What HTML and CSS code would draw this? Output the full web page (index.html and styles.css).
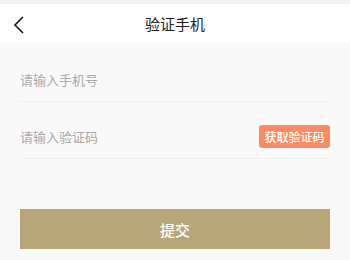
FILE: index.html
```html
<!DOCTYPE html>
<html>
<head>
    <meta charset="utf-8">
    <title>验证手机</title>
    <link rel="stylesheet" href="styles.css">
</head>
<body>
    <div class="topbar"></div>
    <div class="header">
        <a class="back" href="#">
            <svg width="12" height="18" viewBox="0 0 12 18">
                <path d="M10 1 L2 9 L10 17" fill="none" stroke="#111" stroke-width="1.6"/>
            </svg>
        </a>
        <h1>验证手机</h1>
    </div>
    <form class="form">
        <div class="field">
            <input type="text" placeholder="请输入手机号">
        </div>
        <div class="field">
            <input type="text" placeholder="请输入验证码">
            <button type="button" class="code-btn">获取验证码</button>
        </div>
        <button type="submit" class="submit">提交</button>
    </form>
</body>
</html>
```

FILE: styles.css
```css
body {
    margin: 0;
    background: #f9f9f9;
    font-family: "Noto Sans CJK SC", "Noto Sans", sans-serif;
}
.topbar {
    height: 4px;
    background: #f2f2f2;
}
.header {
    height: 39px;
    background: #fff;
    display: flex;
    align-items: center;
    justify-content: center;
    position: relative;
}
.back {
    position: absolute;
    left: 13px;
    top: 11px;
    display: block;
}
h1 {
    margin: 0;
    font-size: 15px;
    font-weight: normal;
    color: #222;
}
.form {
    padding: 15px 20px 0;
}
.field {
    box-sizing: border-box;
    height: 44px;
    display: flex;
    align-items: center;
    border-bottom: 1px solid #f0f0f0;
    margin-bottom: 13px;
}
.field input {
    flex: 1;
    border: none;
    background: transparent;
    font-family: inherit;
    font-size: 13px;
    color: #333;
    padding: 0;
    outline: none;
}
.field input::placeholder {
    color: #aaa;
}
.code-btn {
    background: #fd8a61;
    color: #fff;
    border: none;
    border-radius: 3px;
    font-family: inherit;
    font-size: 12px;
    font-weight: 500;
    height: 23px;
    width: 71px;
    padding: 0;
}
.submit {
    display: block;
    width: 100%;
    height: 40px;
    margin-top: 50px;
    background: #b8a679;
    color: #fff;
    border: none;
    font-family: inherit;
    font-size: 15px;
    font-weight: 500;
}
```
